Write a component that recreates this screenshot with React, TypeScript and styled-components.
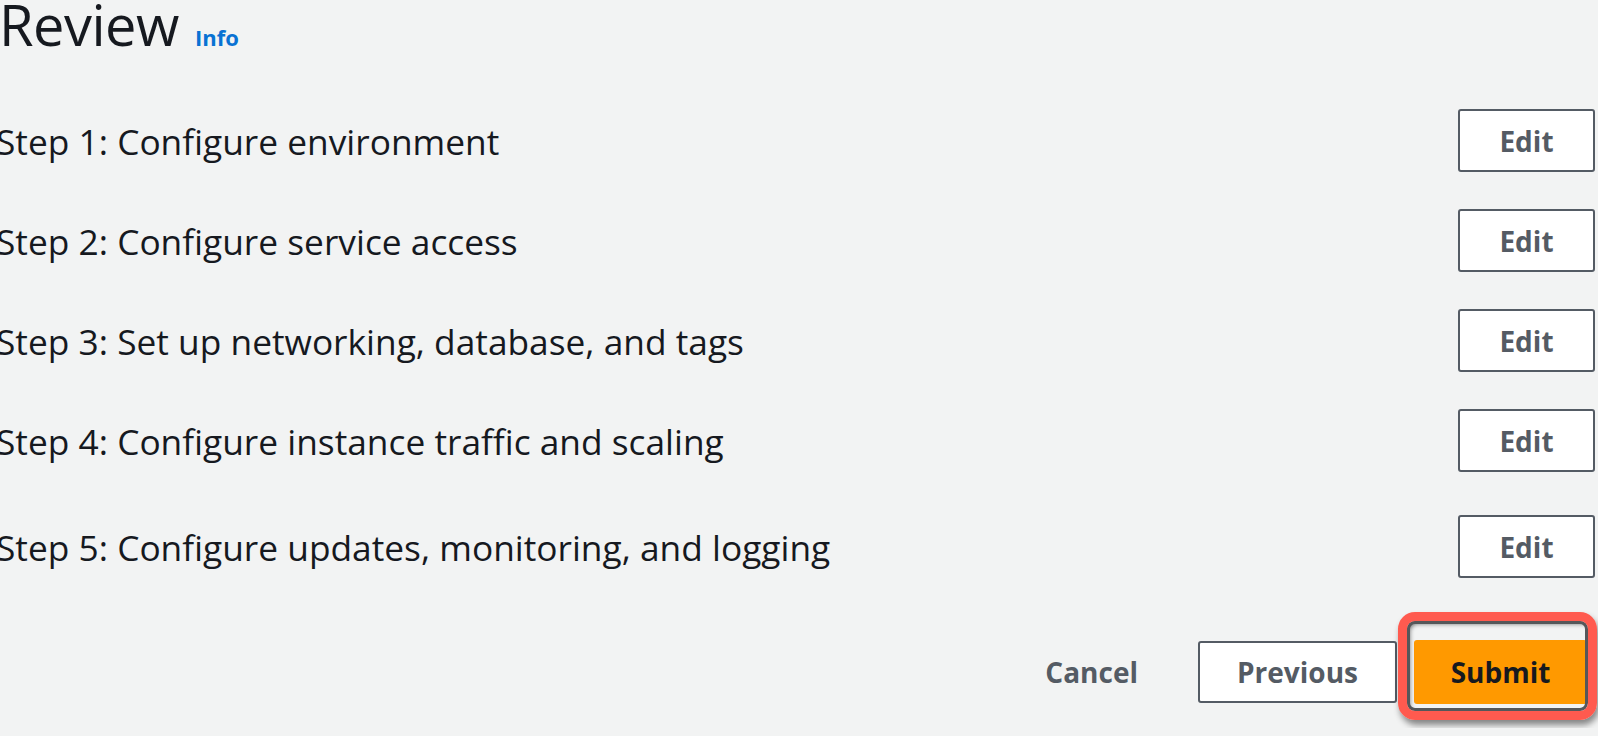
import styled, { createGlobalStyle } from 'styled-components';

const GlobalStyle = createGlobalStyle`
    html, body {
        margin: 0;
        padding: 0;
        background: #f2f3f3;
        overflow: hidden;
    }
    body {
        font-family: "Open Sans", "Noto Sans", sans-serif;
        color: #16191f;
    }
`;

const steps = [
    'Step 1: Configure environment',
    'Step 2: Configure service access',
    'Step 3: Set up networking, database, and tags',
    'Step 4: Configure instance traffic and scaling',
    'Step 5: Configure updates, monitoring, and logging',
];

const App = () => {
    return (
        <Page>
            <GlobalStyle />
            <Header>
                <Title>Review</Title>
                <InfoLink href="#">Info</InfoLink>
            </Header>
            <StepList>
                {steps.map((label, i) => (
                    <StepRow key={label} last={i === steps.length - 1}>
                        <StepTitle>{label}</StepTitle>
                        <OutlineButton>Edit</OutlineButton>
                    </StepRow>
                ))}
            </StepList>
            <Footer>
                <LinkButton>Cancel</LinkButton>
                <PreviousButton>Previous</PreviousButton>
                <SubmitWrap>
                    <Highlight />
                    <SubmitButton>Submit</SubmitButton>
                </SubmitWrap>
            </Footer>
        </Page>
    );
};

export default App;

const Page = styled.div`
    width: 1602px;
    height: 736px;
    box-sizing: border-box;
    padding-right: 3px;
    margin-left: -4px;
`;

const Header = styled.div`
    display: flex;
    align-items: baseline;
    gap: 16px;
    height: 56px;
    margin-top: -8px;
    padding-left: 3px;
`;

const Title = styled.h1`
    margin: 0;
    font-size: 56px;
    font-weight: 400;
    line-height: 64px;
    letter-spacing: -0.5px;
`;

const InfoLink = styled.a`
    font-size: 22px;
    font-weight: 700;
    color: #0972d3;
    text-decoration: none;
`;

const StepList = styled.div`
    display: flex;
    flex-direction: column;
    padding-top: 61px;
`;

const StepRow = styled.div<{ last?: boolean }>`
    display: flex;
    align-items: center;
    justify-content: space-between;
    height: 63px;
    margin-bottom: 37px;
    margin-top: ${p => (p.last ? '6px' : '0')};
`;

const StepTitle = styled.h2`
    margin: 0;
    font-size: 35.3px;
    font-weight: 400;
    color: #16191f;
`;

const OutlineButton = styled.button`
    width: 137px;
    height: 63px;
    box-sizing: border-box;
    border: 2px solid #545b64;
    border-radius: 3px;
    background: #ffffff;
    color: #545b64;
    font-family: "Open Sans", "Noto Sans", sans-serif;
    font-size: 28px;
    font-weight: 700;
    cursor: pointer;
`;

const Footer = styled.div`
    display: flex;
    align-items: center;
    justify-content: flex-end;
    padding-right: 8px;
    margin-top: -37px;
    padding-top: 62px;
`;

const LinkButton = styled.button`
    border: none;
    background: transparent;
    color: #545b64;
    font-family: "Open Sans", "Noto Sans", sans-serif;
    font-size: 28px;
    font-weight: 700;
    padding: 0 30px;
    margin-right: 30px;
    cursor: pointer;
`;

const PreviousButton = styled(OutlineButton)`
    width: 199px;
    height: 62px;
`;

const SubmitWrap = styled.div`
    position: relative;
    margin-left: 17px;
`;

const SubmitButton = styled.button`
    position: relative;
    width: 173px;
    height: 64px;
    border: none;
    border-radius: 3px;
    background: #ff9900;
    color: #16191f;
    font-family: "Open Sans", "Noto Sans", sans-serif;
    font-size: 28px;
    font-weight: 700;
    cursor: pointer;
`;

const Highlight = styled.div`
    position: absolute;
    left: -16px;
    top: -28px;
    right: -10px;
    bottom: -16px;
    border: 9px solid #ff5a4f;
    border-radius: 17px;
    box-shadow: inset 0 0 0 3px #55575a, inset 3px 3px 4px rgba(0, 0, 0, 0.5),
        2px 5px 6px rgba(0, 0, 0, 0.45);
    z-index: 2;
    pointer-events: none;
`;
